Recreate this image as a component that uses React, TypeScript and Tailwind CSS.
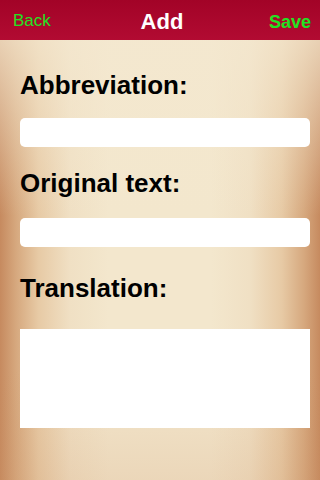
export default function App() {
  return (
    <div
      className="flex h-[480px] w-[320px] flex-col overflow-hidden"
      style={{ fontFamily: '"Liberation Sans", Arial, sans-serif' }}
    >
      <header className="grid h-10 shrink-0 grid-cols-[1fr_auto_1fr] items-center bg-[linear-gradient(to_bottom,#a20327,#b20b32)] pl-[13px] pr-[9px]">
        <button className="justify-self-start text-[17px] leading-none text-[#22e322]">
          Back
        </button>
        <h1 className="pt-[3px] text-[22px] font-bold leading-none text-white">Add</h1>
        <button className="justify-self-end pt-[3px] text-[18px] font-bold leading-none text-[#22e322]">
          Save
        </button>
      </header>

      {/* parchment: side vignette, softened near the top, a bit darker at the bottom */}
      <main className="flex flex-1 flex-col bg-[image:linear-gradient(to_bottom,rgba(244,232,208,0.75),rgba(244,232,208,0)_40%,rgba(200,140,95,0)_75%,rgba(200,140,95,0.18)_100%),linear-gradient(to_right,#c68a5f_0%,#d6a87e_5%,#e7caa5_12%,#f0e0c4_22%,#f3e7cd_34%,#f3e7cd_66%,#f0e0c4_78%,#e7caa5_88%,#d6a87e_95%,#c68a5f_100%)] pl-5 pr-[10px] pt-[30px]">
        <label className="text-[26px] font-bold leading-[30px] text-black">Abbreviation:</label>
        <input
          type="text"
          className="mt-[18px] h-[29px] w-full rounded-[5px] bg-white px-2 text-base outline-none"
        />

        <label className="mt-[21px] text-[26px] font-bold leading-[30px] text-black">
          Original text:
        </label>
        <input
          type="text"
          className="mt-5 h-[29px] w-full rounded-[5px] bg-white px-2 text-base outline-none"
        />

        <label className="mt-[26px] text-[26px] font-bold leading-[30px] text-black">
          Translation:
        </label>
        <textarea className="mt-[26px] h-[99px] w-full resize-none bg-white p-2 text-base outline-none" />
      </main>
    </div>
  );
}
